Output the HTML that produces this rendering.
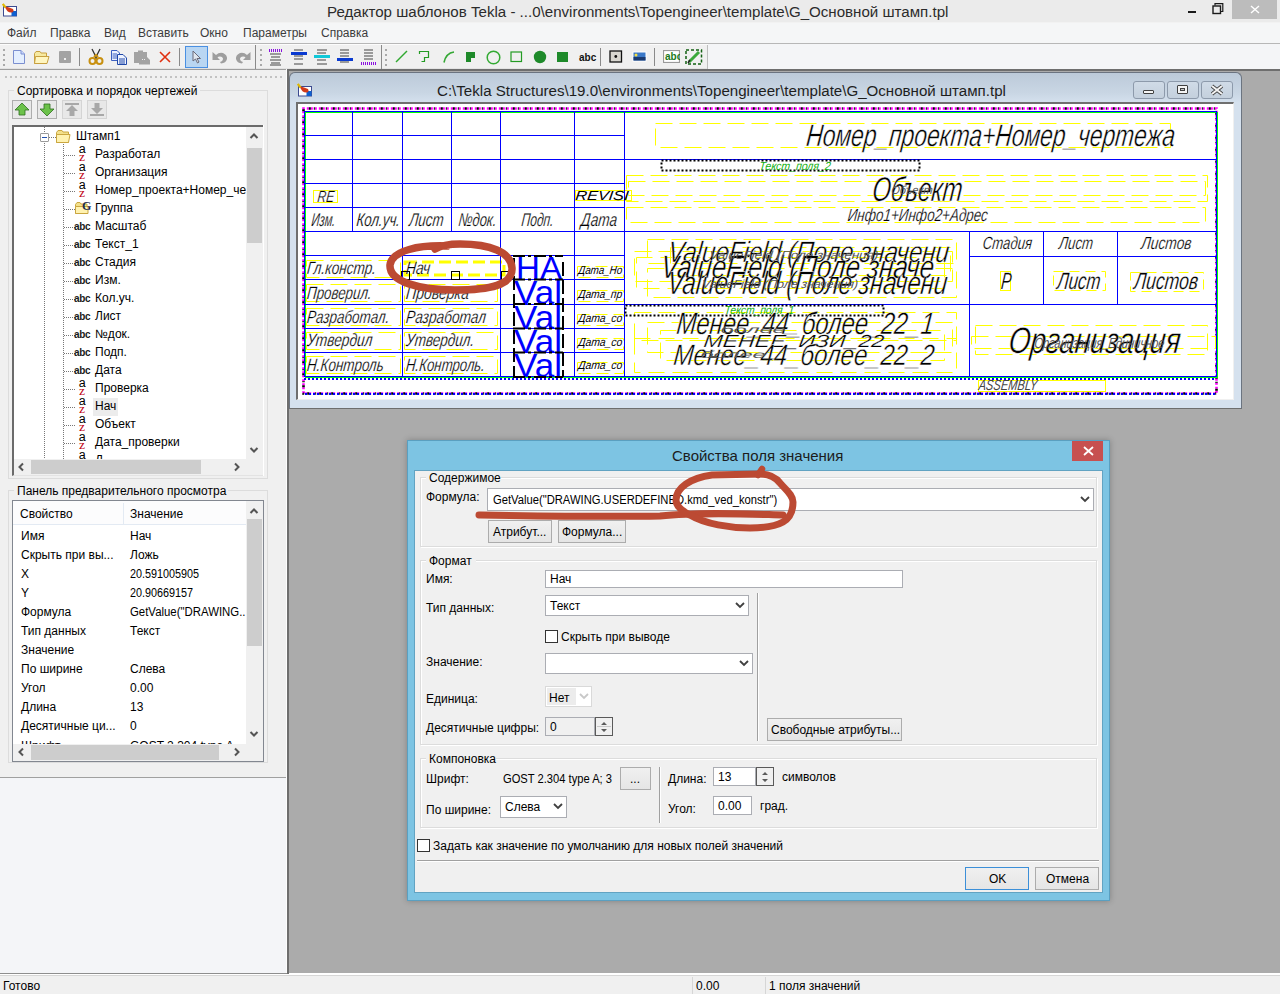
<!DOCTYPE html>
<html><head><meta charset="utf-8">
<style>
*{margin:0;padding:0;box-sizing:border-box}
html,body{width:1280px;height:994px;overflow:hidden;background:#ababab;font-family:"Liberation Sans",sans-serif;font-size:12px;color:#000;position:relative}
.a{position:absolute}
svg.a{overflow:visible}
.t{position:absolute;white-space:pre;line-height:1}
.g{font-family:"Liberation Sans",sans-serif;font-style:italic}
</style></head><body>
<div class="a" style="left:0px;top:0px;width:1280px;height:22px;background:#ebebeb"></div>
<div class="t" style="left:327px;top:4px;font-size:15.1px;color:#2b2b2b;">Редактор шаблонов Tekla - ...0\environments\Topengineer\template\G_Основной штамп.tpl</div>
<svg class="a" style="left:2px;top:3px;" width="17" height="15" viewBox="0 0 17 15"><rect x="1.5" y="3.5" width="13" height="9.5" fill="#fff" stroke="#3c4a90"/><rect x="9.5" y="8" width="5" height="5" fill="#1060d0"/><path d="M3 4 Q5 10 10 9.5 Q12.5 8.5 11 6 Q8 4.5 4 3.5Z" fill="#d23a1a"/><path d="M0.8 0.8 L3.5 4.5" stroke="#e0b800" stroke-width="2.2"/></svg>
<div class="a" style="left:1232px;top:0px;width:45px;height:19px;background:#bcbcbc"></div>
<svg class="a" style="left:1250px;top:5px;" width="10" height="9" viewBox="0 0 10 9"><path d="M1 1 L9 8 M9 1 L1 8" stroke="#fff" stroke-width="1.4"/></svg>
<div class="a" style="left:1188px;top:11px;width:8px;height:2px;background:#1a1a1a"></div>
<svg class="a" style="left:1212px;top:3px;" width="12" height="11" viewBox="0 0 12 11"><rect x="1" y="3" width="7.5" height="7.5" fill="none" stroke="#1a1a1a" stroke-width="1.4"/><path d="M3 2.5 V0.7 H10.8 V8.5 H9" fill="none" stroke="#1a1a1a" stroke-width="1.2"/></svg>
<div class="a" style="left:0px;top:22px;width:1280px;height:1px;background:#f2f2f2"></div>
<div class="a" style="left:0px;top:23px;width:1280px;height:20px;background:#f5f6f7"></div>
<div class="a" style="left:0px;top:43px;width:1280px;height:1px;background:#b7b7b7"></div>
<div class="t" style="left:7px;top:27px;font-size:12px;color:#3c3c3c;">Файл</div>
<div class="t" style="left:50px;top:27px;font-size:12px;color:#3c3c3c;">Правка</div>
<div class="t" style="left:104px;top:27px;font-size:12px;color:#3c3c3c;">Вид</div>
<div class="t" style="left:138px;top:27px;font-size:12px;color:#3c3c3c;">Вставить</div>
<div class="t" style="left:200px;top:27px;font-size:12px;color:#3c3c3c;">Окно</div>
<div class="t" style="left:243px;top:27px;font-size:12px;color:#3c3c3c;">Параметры</div>
<div class="t" style="left:321px;top:27px;font-size:12px;color:#3c3c3c;">Справка</div>
<div class="a" style="left:0px;top:44px;width:1280px;height:25px;background:#f0f0f0"></div>
<div class="a" style="left:0px;top:44px;width:1280px;height:1px;background:#fcfcfc"></div>
<div class="a" style="left:0px;top:68px;width:1280px;height:1px;background:#e3e3e3"></div>
<div class="a" style="left:3px;top:49px;width:2px;height:2px;background:#a9a9a9"></div>
<div class="a" style="left:3px;top:54px;width:2px;height:2px;background:#a9a9a9"></div>
<div class="a" style="left:3px;top:59px;width:2px;height:2px;background:#a9a9a9"></div>
<div class="a" style="left:3px;top:64px;width:2px;height:2px;background:#a9a9a9"></div>
<svg class="a" style="left:13px;top:50px;" width="12" height="14" viewBox="0 0 12 14"><path d="M0.5 0.5 H8 L11.5 4 V13.5 H0.5Z" fill="#e4efff" stroke="#7b8fd0"/><path d="M8 0.5 V4 H11.5" fill="#c8d8ff" stroke="#7b8fd0"/></svg>
<svg class="a" style="left:34px;top:51px;" width="16" height="13" viewBox="0 0 16 13"><path d="M0.5 2.5 L2 0.5 H6 L7 2 H12.5 V12.5 H0.5Z" fill="#f6e9a0" stroke="#c8a040"/><path d="M1.5 5.5 H15 L13 12.5 H0.5Z" fill="#fff6c0" stroke="#c8a040"/></svg>
<div class="a" style="left:59px;top:51px;width:12px;height:12px;background:#a3a3a3;border-radius:1px"></div>
<div class="a" style="left:64px;top:58px;width:2px;height:2px;background:#eee"></div>
<div class="a" style="left:79px;top:48px;width:1px;height:18px;background:#8a8a8a"></div>
<svg class="a" style="left:88px;top:48px;" width="16" height="17" viewBox="0 0 16 17"><path d="M4 1 L9 11 M12 1 L7 11" stroke="#333" stroke-width="1.3"/><circle cx="4.5" cy="13" r="3" fill="none" stroke="#c89010" stroke-width="2"/><circle cx="11.5" cy="13" r="3" fill="none" stroke="#c89010" stroke-width="2"/><path d="M6 9 L8 7 L10 9" stroke="#c89010" stroke-width="2" fill="none"/></svg>
<svg class="a" style="left:111px;top:50px;" width="17" height="15" viewBox="0 0 17 15"><path d="M0.5 0.5 H6 L8.5 3 V10.5 H0.5Z" fill="#eef3ff" stroke="#3b5fc0"/><path d="M1.5 4 H6 M1.5 6 H6 M1.5 8 H6" stroke="#3b5fc0"/><path d="M6.5 4.5 H12 L15.5 8 V14.5 H6.5Z" fill="#eef3ff" stroke="#2048a8"/><path d="M8 9 H14 M8 11 H14 M8 13 H14" stroke="#2048a8"/></svg>
<svg class="a" style="left:133px;top:50px;" width="18" height="15" viewBox="0 0 18 15"><path d="M1 2 H5 V0.5 H10 V2 H14 V7 L17 10 V14.5 H6 V13 H1Z" fill="#a3a3a3"/><path d="M9 10 L10 9 M11 10 L12 9" stroke="#eee"/></svg>
<svg class="a" style="left:159px;top:51px;" width="12" height="12" viewBox="0 0 12 12"><path d="M1 1 L11 11 M11 1 L1 11" stroke="#e03010" stroke-width="1.6"/></svg>
<div class="a" style="left:179px;top:48px;width:1px;height:18px;background:#8a8a8a"></div>
<div class="a" style="left:185px;top:46px;width:23px;height:22px;background:#b9d6f2;border:1px solid #4a90e2"></div>
<svg class="a" style="left:192px;top:50px;" width="10" height="14" viewBox="0 0 10 14"><path d="M1 1 V11 L3.5 9 L5.5 13 L7 12 L5 8.5 H8.5Z" fill="#dfe6ee" stroke="#6b6b7a"/></svg>
<svg class="a" style="left:212px;top:51px;" width="16" height="13" viewBox="0 0 16 13"><path d="M0.5 1 L4 4 Q7 1 11 2 Q15.5 4 15 8 Q14 12 9 12.5 L8 11 Q11 10 11 7.5 Q10.5 5.5 8 5.5 Q6 5.5 5.5 6.5 L8 9 H0.5Z" fill="#9e9e9e"/></svg>
<svg class="a" style="left:235px;top:51px;" width="16" height="13" viewBox="0 0 16 13"><path d="M15.5 1 L12 4 Q9 1 5 2 Q0.5 4 1 8 Q2 12 7 12.5 L8 11 Q5 10 5 7.5 Q5.5 5.5 8 5.5 Q10 5.5 10.5 6.5 L8 9 H15.5Z" fill="#9e9e9e"/></svg>
<div class="a" style="left:255px;top:45px;width:1px;height:24px;background:#8a8a8a"></div>
<div class="a" style="left:260px;top:49px;width:2px;height:2px;background:#a9a9a9"></div>
<div class="a" style="left:260px;top:54px;width:2px;height:2px;background:#a9a9a9"></div>
<div class="a" style="left:260px;top:59px;width:2px;height:2px;background:#a9a9a9"></div>
<div class="a" style="left:260px;top:64px;width:2px;height:2px;background:#a9a9a9"></div>
<div class="a" style="left:269px;top:49px;width:1px;height:3px;background:#8a10e0"></div>
<div class="a" style="left:271px;top:49px;width:1px;height:3px;background:#8a10e0"></div>
<div class="a" style="left:273px;top:49px;width:1px;height:3px;background:#8a10e0"></div>
<div class="a" style="left:275px;top:49px;width:1px;height:3px;background:#8a10e0"></div>
<div class="a" style="left:277px;top:49px;width:1px;height:3px;background:#8a10e0"></div>
<div class="a" style="left:279px;top:49px;width:1px;height:3px;background:#8a10e0"></div>
<div class="a" style="left:281px;top:49px;width:1px;height:3px;background:#8a10e0"></div>
<div class="a" style="left:270px;top:53px;width:11px;height:2px;background:#9a9a9a"></div>
<div class="a" style="left:271px;top:56px;width:9px;height:2px;background:#9a9a9a"></div>
<div class="a" style="left:270px;top:59px;width:11px;height:2px;background:#9a9a9a"></div>
<div class="a" style="left:271px;top:62px;width:9px;height:2px;background:#9a9a9a"></div>
<div class="a" style="left:270px;top:64px;width:11px;height:2px;background:#9a9a9a"></div>
<div class="a" style="left:294px;top:49px;width:9px;height:2px;background:#9a9a9a"></div>
<div class="a" style="left:294px;top:55px;width:9px;height:2px;background:#9a9a9a"></div>
<div class="a" style="left:294px;top:58px;width:9px;height:2px;background:#9a9a9a"></div>
<div class="a" style="left:294px;top:63px;width:9px;height:2px;background:#9a9a9a"></div>
<div class="a" style="left:291px;top:52px;width:16px;height:3px;background:#0a3ad0;border-top:1px dotted #0a3ad0"></div>
<div class="a" style="left:317px;top:49px;width:10px;height:2px;background:#9a9a9a"></div>
<div class="a" style="left:317px;top:52px;width:9px;height:2px;background:#9a9a9a"></div>
<div class="a" style="left:317px;top:59px;width:9px;height:2px;background:#9a9a9a"></div>
<div class="a" style="left:317px;top:63px;width:10px;height:2px;background:#9a9a9a"></div>
<div class="a" style="left:314px;top:55px;width:16px;height:3px;background:#10c8d8"></div>
<div class="a" style="left:340px;top:49px;width:9px;height:2px;background:#9a9a9a"></div>
<div class="a" style="left:340px;top:52px;width:9px;height:2px;background:#9a9a9a"></div>
<div class="a" style="left:340px;top:55px;width:9px;height:2px;background:#9a9a9a"></div>
<div class="a" style="left:340px;top:61px;width:9px;height:2px;background:#9a9a9a"></div>
<div class="a" style="left:337px;top:58px;width:16px;height:3px;background:#0a3ad0"></div>
<div class="a" style="left:364px;top:49px;width:9px;height:2px;background:#9a9a9a"></div>
<div class="a" style="left:364px;top:52px;width:9px;height:2px;background:#9a9a9a"></div>
<div class="a" style="left:364px;top:55px;width:9px;height:2px;background:#9a9a9a"></div>
<div class="a" style="left:364px;top:58px;width:9px;height:2px;background:#9a9a9a"></div>
<div class="a" style="left:361px;top:62px;width:1px;height:3px;background:#8a10e0"></div>
<div class="a" style="left:363px;top:62px;width:1px;height:3px;background:#8a10e0"></div>
<div class="a" style="left:365px;top:62px;width:1px;height:3px;background:#8a10e0"></div>
<div class="a" style="left:367px;top:62px;width:1px;height:3px;background:#8a10e0"></div>
<div class="a" style="left:369px;top:62px;width:1px;height:3px;background:#8a10e0"></div>
<div class="a" style="left:371px;top:62px;width:1px;height:3px;background:#8a10e0"></div>
<div class="a" style="left:373px;top:62px;width:1px;height:3px;background:#8a10e0"></div>
<div class="a" style="left:375px;top:62px;width:1px;height:3px;background:#8a10e0"></div>
<div class="a" style="left:381px;top:45px;width:1px;height:24px;background:#8a8a8a"></div>
<div class="a" style="left:385px;top:49px;width:2px;height:2px;background:#a9a9a9"></div>
<div class="a" style="left:385px;top:54px;width:2px;height:2px;background:#a9a9a9"></div>
<div class="a" style="left:385px;top:59px;width:2px;height:2px;background:#a9a9a9"></div>
<div class="a" style="left:385px;top:64px;width:2px;height:2px;background:#a9a9a9"></div>
<svg class="a" style="left:395px;top:50px;" width="13" height="13" viewBox="0 0 13 13"><path d="M1 12 L12 1" stroke="#2fa82f" stroke-width="1.4"/></svg>
<svg class="a" style="left:419px;top:51px;" width="11" height="12" viewBox="0 0 11 12"><path d="M0.5 3 V0.5 H9.5 V6.5 H5.5 V10.5 H2.5" fill="none" stroke="#239b23" stroke-width="1.2"/></svg>
<svg class="a" style="left:443px;top:51px;" width="12" height="12" viewBox="0 0 12 12"><path d="M1 11.5 Q3 2 11 1" fill="none" stroke="#35a835" stroke-width="1.6"/></svg>
<svg class="a" style="left:466px;top:52px;" width="9" height="10" viewBox="0 0 9 10"><path d="M0 0 H9 V6 H5 V10 H0Z" fill="#1e8a2a"/></svg>
<svg class="a" style="left:486px;top:50px;" width="15" height="15" viewBox="0 0 15 15"><circle cx="7.5" cy="7.5" r="6.3" fill="none" stroke="#33aa33" stroke-width="1.5"/></svg>
<svg class="a" style="left:510px;top:51px;" width="13" height="12" viewBox="0 0 13 12"><rect x="1" y="1" width="10.5" height="9.5" fill="none" stroke="#239b23" stroke-width="1.2"/></svg>
<svg class="a" style="left:533px;top:50px;" width="14" height="14" viewBox="0 0 14 14"><circle cx="7" cy="7" r="6.2" fill="#1e8a2a"/></svg>
<div class="a" style="left:557px;top:52px;width:11px;height:10px;background:#1e8a2a"></div>
<div class="t" style="left:579px;top:53px;font-size:10px;color:#111;font-weight:bold">abc</div>
<div class="a" style="left:600px;top:48px;width:1px;height:18px;background:#8a8a8a"></div>
<svg class="a" style="left:609px;top:50px;" width="14" height="13" viewBox="0 0 14 13"><rect x="1" y="1" width="11.5" height="11" fill="#d8d6d0" stroke="#111" stroke-width="1.3"/><circle cx="6.8" cy="6.5" r="1.4" fill="#111"/></svg>
<svg class="a" style="left:632px;top:51px;" width="16" height="12" viewBox="0 0 16 12"><rect x="0.5" y="0.5" width="14" height="10" fill="#fff"/><rect x="1.5" y="1.5" width="12" height="8" fill="#3a78c8"/><rect x="1.5" y="6" width="12" height="3.5" fill="#1a3a70"/><circle cx="4" cy="4" r="1.5" fill="#f8e040"/></svg>
<div class="a" style="left:654px;top:48px;width:1px;height:18px;background:#8a8a8a"></div>
<svg class="a" style="left:663px;top:50px;overflow:hidden" width="17" height="13" viewBox="0 0 17 13"><rect x="0.5" y="0.5" width="16" height="12" fill="#fff" stroke="#9a9a9a" stroke-width="1.2"/><text x="2" y="10" font-family="Liberation Sans" font-weight="bold" font-size="10" fill="#1a7a1a">abc</text></svg>
<svg class="a" style="left:685px;top:49px;" width="18" height="16" viewBox="0 0 18 16"><rect x="1" y="1" width="15.5" height="14" fill="none" stroke="#126012" stroke-width="1.5" stroke-dasharray="3 2"/><path d="M4 13 L14 3" stroke="#3aa83a" stroke-width="3"/><path d="M3 14 L5 11" stroke="#222" stroke-width="1.5"/></svg>
<div class="a" style="left:708px;top:44px;width:572px;height:25px;background:#f4f5f7"></div>
<div class="a" style="left:707px;top:45px;width:1px;height:24px;background:#bdbdbd"></div>
<div class="a" style="left:287px;top:69px;width:993px;height:2px;background:#6e6e6e"></div>
<div class="a" style="left:289px;top:973px;width:991px;height:1px;background:#ffffff"></div>
<div class="a" style="left:0px;top:974px;width:1280px;height:1px;background:#ffffff"></div>
<div class="a" style="left:0px;top:975px;width:1280px;height:1px;background:#d6d6d6"></div>
<div class="a" style="left:0px;top:976px;width:1280px;height:18px;background:#f0f0f0"></div>
<div class="t" style="left:3px;top:980px;font-size:12px;color:#000;">Готово</div>
<div class="a" style="left:692px;top:977px;width:1px;height:17px;background:#d6d6d6"></div>
<div class="t" style="left:696px;top:980px;font-size:12px;color:#000;">0.00</div>
<div class="a" style="left:765px;top:977px;width:1px;height:17px;background:#d6d6d6"></div>
<div class="t" style="left:769px;top:980px;font-size:12px;color:#000;">1 поля значений</div>
<div class="a" style="left:0px;top:69px;width:287px;height:708px;background:#f0f0f0"></div>
<div class="a" style="left:0px;top:69px;width:287px;height:1px;background:#9e9e9e"></div>
<div class="a" style="left:0px;top:777px;width:287px;height:1px;background:#a0a0a0"></div>
<div class="a" style="left:0px;top:778px;width:287px;height:195px;background:#f4f5f8"></div>
<div class="a" style="left:0px;top:973px;width:287px;height:1px;background:#8e8e8e"></div>
<div class="a" style="left:286px;top:69px;width:1px;height:904px;background:#fdfdfd"></div>
<div class="a" style="left:287px;top:69px;width:2px;height:905px;background:#6e6e6e"></div>
<div class="a" style="left:5px;top:76px;width:2px;height:2px;background:#c2c2c2"></div>
<div class="a" style="left:10px;top:76px;width:2px;height:2px;background:#c2c2c2"></div>
<div class="a" style="left:15px;top:76px;width:2px;height:2px;background:#c2c2c2"></div>
<div class="a" style="left:20px;top:76px;width:2px;height:2px;background:#c2c2c2"></div>
<div class="a" style="left:25px;top:76px;width:2px;height:2px;background:#c2c2c2"></div>
<div class="a" style="left:30px;top:76px;width:2px;height:2px;background:#c2c2c2"></div>
<div class="a" style="left:35px;top:76px;width:2px;height:2px;background:#c2c2c2"></div>
<div class="a" style="left:40px;top:76px;width:2px;height:2px;background:#c2c2c2"></div>
<div class="a" style="left:45px;top:76px;width:2px;height:2px;background:#c2c2c2"></div>
<div class="a" style="left:50px;top:76px;width:2px;height:2px;background:#c2c2c2"></div>
<div class="a" style="left:55px;top:76px;width:2px;height:2px;background:#c2c2c2"></div>
<div class="a" style="left:60px;top:76px;width:2px;height:2px;background:#c2c2c2"></div>
<div class="a" style="left:65px;top:76px;width:2px;height:2px;background:#c2c2c2"></div>
<div class="a" style="left:70px;top:76px;width:2px;height:2px;background:#c2c2c2"></div>
<div class="a" style="left:75px;top:76px;width:2px;height:2px;background:#c2c2c2"></div>
<div class="a" style="left:80px;top:76px;width:2px;height:2px;background:#c2c2c2"></div>
<div class="a" style="left:85px;top:76px;width:2px;height:2px;background:#c2c2c2"></div>
<div class="a" style="left:90px;top:76px;width:2px;height:2px;background:#c2c2c2"></div>
<div class="a" style="left:95px;top:76px;width:2px;height:2px;background:#c2c2c2"></div>
<div class="a" style="left:100px;top:76px;width:2px;height:2px;background:#c2c2c2"></div>
<div class="a" style="left:105px;top:76px;width:2px;height:2px;background:#c2c2c2"></div>
<div class="a" style="left:110px;top:76px;width:2px;height:2px;background:#c2c2c2"></div>
<div class="a" style="left:115px;top:76px;width:2px;height:2px;background:#c2c2c2"></div>
<div class="a" style="left:120px;top:76px;width:2px;height:2px;background:#c2c2c2"></div>
<div class="a" style="left:125px;top:76px;width:2px;height:2px;background:#c2c2c2"></div>
<div class="a" style="left:130px;top:76px;width:2px;height:2px;background:#c2c2c2"></div>
<div class="a" style="left:135px;top:76px;width:2px;height:2px;background:#c2c2c2"></div>
<div class="a" style="left:140px;top:76px;width:2px;height:2px;background:#c2c2c2"></div>
<div class="a" style="left:145px;top:76px;width:2px;height:2px;background:#c2c2c2"></div>
<div class="a" style="left:150px;top:76px;width:2px;height:2px;background:#c2c2c2"></div>
<div class="a" style="left:155px;top:76px;width:2px;height:2px;background:#c2c2c2"></div>
<div class="a" style="left:160px;top:76px;width:2px;height:2px;background:#c2c2c2"></div>
<div class="a" style="left:165px;top:76px;width:2px;height:2px;background:#c2c2c2"></div>
<div class="a" style="left:170px;top:76px;width:2px;height:2px;background:#c2c2c2"></div>
<div class="a" style="left:175px;top:76px;width:2px;height:2px;background:#c2c2c2"></div>
<div class="a" style="left:180px;top:76px;width:2px;height:2px;background:#c2c2c2"></div>
<div class="a" style="left:185px;top:76px;width:2px;height:2px;background:#c2c2c2"></div>
<div class="a" style="left:190px;top:76px;width:2px;height:2px;background:#c2c2c2"></div>
<div class="a" style="left:195px;top:76px;width:2px;height:2px;background:#c2c2c2"></div>
<div class="a" style="left:200px;top:76px;width:2px;height:2px;background:#c2c2c2"></div>
<div class="a" style="left:205px;top:76px;width:2px;height:2px;background:#c2c2c2"></div>
<div class="a" style="left:210px;top:76px;width:2px;height:2px;background:#c2c2c2"></div>
<div class="a" style="left:215px;top:76px;width:2px;height:2px;background:#c2c2c2"></div>
<div class="a" style="left:220px;top:76px;width:2px;height:2px;background:#c2c2c2"></div>
<div class="a" style="left:225px;top:76px;width:2px;height:2px;background:#c2c2c2"></div>
<div class="a" style="left:230px;top:76px;width:2px;height:2px;background:#c2c2c2"></div>
<div class="a" style="left:235px;top:76px;width:2px;height:2px;background:#c2c2c2"></div>
<div class="a" style="left:240px;top:76px;width:2px;height:2px;background:#c2c2c2"></div>
<div class="a" style="left:245px;top:76px;width:2px;height:2px;background:#c2c2c2"></div>
<div class="a" style="left:250px;top:76px;width:2px;height:2px;background:#c2c2c2"></div>
<div class="a" style="left:255px;top:76px;width:2px;height:2px;background:#c2c2c2"></div>
<div class="a" style="left:260px;top:76px;width:2px;height:2px;background:#c2c2c2"></div>
<div class="a" style="left:265px;top:76px;width:2px;height:2px;background:#c2c2c2"></div>
<div class="a" style="left:270px;top:76px;width:2px;height:2px;background:#c2c2c2"></div>
<div class="a" style="left:275px;top:76px;width:2px;height:2px;background:#c2c2c2"></div>
<div class="a" style="left:280px;top:76px;width:2px;height:2px;background:#c2c2c2"></div>
<div class="a" style="left:8px;top:90px;width:260px;height:389px;border:1px solid #dcdcdc;border-right-color:#dcdcdc"></div>
<div class="a" style="left:14px;top:86px;width:186px;height:10px;background:#f0f0f0"></div>
<div class="t" style="left:17px;top:85px;font-size:12px;color:#000;">Сортировка и порядок чертежей</div>
<div class="a" style="left:12px;top:100px;width:20px;height:19px;background:#e8e8e8;border:1px solid #adadad"></div>
<svg class="a" style="left:14px;top:102px;" width="16" height="15" viewBox="0 0 16 15"><path d="M8 1 L15 8 H11 V13 H5 V8 H1Z" fill="#6cc24a" stroke="#2d6e1e" stroke-width="0.8"/></svg>
<div class="a" style="left:37px;top:100px;width:20px;height:19px;background:#e8e8e8;border:1px solid #adadad"></div>
<svg class="a" style="left:39px;top:102px;" width="16" height="15" viewBox="0 0 16 15"><path d="M8 14 L15 7 H11 V2 H5 V7 H1Z" fill="#6cc24a" stroke="#2d6e1e" stroke-width="0.8"/></svg>
<div class="a" style="left:62px;top:100px;width:20px;height:19px;background:#e8e8e8;border:1px solid #d4d4d4"></div>
<svg class="a" style="left:64px;top:102px;" width="16" height="15" viewBox="0 0 16 15"><rect x="1" y="1" width="14" height="2" fill="#a8a8a8"/><path d="M8 3 L14 9 H10.5 V14 H5.5 V9 H2Z" fill="#a8a8a8"/></svg>
<div class="a" style="left:87px;top:100px;width:20px;height:19px;background:#e8e8e8;border:1px solid #d4d4d4"></div>
<svg class="a" style="left:89px;top:102px;" width="16" height="15" viewBox="0 0 16 15"><rect x="1" y="12" width="14" height="2" fill="#a8a8a8"/><path d="M8 12 L14 6 H10.5 V1 H5.5 V6 H2Z" fill="#a8a8a8"/></svg>
<div class="a" style="left:12px;top:125px;width:252px;height:351px;background:#fff;border-top:2px solid #6b6b6b;border-left:2px solid #6b6b6b;border-right:1px solid #e3e3e3;border-bottom:1px solid #e3e3e3"></div>
<div class="a" style="left:44px;top:127px;width:1px;height:332px;background:repeating-linear-gradient(#777 0 1px,transparent 1px 2px)"></div>
<div class="a" style="left:63px;top:142px;width:1px;height:317px;background:repeating-linear-gradient(#777 0 1px,transparent 1px 2px)"></div>
<div class="a" style="left:40px;top:133px;width:9px;height:9px;background:#fff;border:1px solid #9a9a9a;border-radius:1px"></div>
<div class="a" style="left:42px;top:137px;width:5px;height:1px;background:#2050b0"></div>
<div class="a" style="left:49px;top:137px;width:7px;height:1px;background:repeating-linear-gradient(90deg,#777 0 1px,transparent 1px 2px)"></div>
<svg class="a" style="left:56px;top:130px;" width="15" height="13" viewBox="0 0 15 13"><path d="M0.5 2.5 L2 0.5 H6 L7 2 H12.5 V12.5 H0.5Z" fill="#f3e08a" stroke="#caa640"/><path d="M0.5 4.5 H14 L12.5 12.5 H0.5Z" fill="#fff2b0" stroke="#caa640"/></svg>
<div class="t" style="left:76px;top:130px;font-size:12px;color:#000;">Штамп1</div>
<div class="a" style="left:64px;top:155px;width:11px;height:1px;background:repeating-linear-gradient(90deg,#777 0 1px,transparent 1px 2px)"></div>
<svg class="a" style="left:79px;top:146px;" width="8" height="16" viewBox="0 0 8 16"><text x="-0.3" y="6.5" font-family="Liberation Sans" font-size="12.5" fill="#000">a</text><text x="0" y="14.7" font-family="Liberation Serif" font-size="13.5" fill="#c00010">z</text></svg>
<div class="t" style="left:95px;top:148px;font-size:12px;color:#000;">Разработал</div>
<div class="a" style="left:64px;top:173px;width:11px;height:1px;background:repeating-linear-gradient(90deg,#777 0 1px,transparent 1px 2px)"></div>
<svg class="a" style="left:79px;top:164px;" width="8" height="16" viewBox="0 0 8 16"><text x="-0.3" y="6.5" font-family="Liberation Sans" font-size="12.5" fill="#000">a</text><text x="0" y="14.7" font-family="Liberation Serif" font-size="13.5" fill="#c00010">z</text></svg>
<div class="t" style="left:95px;top:166px;font-size:12px;color:#000;">Организация</div>
<div class="a" style="left:64px;top:191px;width:11px;height:1px;background:repeating-linear-gradient(90deg,#777 0 1px,transparent 1px 2px)"></div>
<svg class="a" style="left:79px;top:182px;" width="8" height="16" viewBox="0 0 8 16"><text x="-0.3" y="6.5" font-family="Liberation Sans" font-size="12.5" fill="#000">a</text><text x="0" y="14.7" font-family="Liberation Serif" font-size="13.5" fill="#c00010">z</text></svg>
<div class="a" style="left:95px;top:182px;width:151px;height:18px;overflow:hidden"><div class="t" style="left:0;top:2px;font-size:12px">Номер_проекта+Номер_чертежа</div></div>
<div class="a" style="left:64px;top:209px;width:11px;height:1px;background:repeating-linear-gradient(90deg,#777 0 1px,transparent 1px 2px)"></div>
<svg class="a" style="left:75px;top:201px;" width="15" height="14" viewBox="0 0 15 14"><path d="M0.5 3.5 L2 1.5 H5 L6 3 H12 V12.5 H0.5Z" fill="#f3e08a" stroke="#caa640"/><path d="M0.5 5.5 H13 V12.5 H0.5Z" fill="#fff2b0" stroke="#caa640"/><text x="7" y="9" font-family="Liberation Serif" font-weight="bold" font-size="12" fill="#1a2a50">G</text></svg>
<div class="t" style="left:95px;top:202px;font-size:12px;color:#000;">Группа</div>
<div class="a" style="left:64px;top:227px;width:11px;height:1px;background:repeating-linear-gradient(90deg,#777 0 1px,transparent 1px 2px)"></div>
<svg class="a" style="left:74px;top:221px;" width="18" height="11" viewBox="0 0 18 11"><text x="0" y="9" font-family="Liberation Sans" font-size="10" font-weight="bold" fill="#1a1a1a" letter-spacing="-0.3">abc</text></svg>
<div class="t" style="left:95px;top:220px;font-size:12px;color:#000;">Масштаб</div>
<div class="a" style="left:64px;top:245px;width:11px;height:1px;background:repeating-linear-gradient(90deg,#777 0 1px,transparent 1px 2px)"></div>
<svg class="a" style="left:74px;top:239px;" width="18" height="11" viewBox="0 0 18 11"><text x="0" y="9" font-family="Liberation Sans" font-size="10" font-weight="bold" fill="#1a1a1a" letter-spacing="-0.3">abc</text></svg>
<div class="t" style="left:95px;top:238px;font-size:12px;color:#000;">Текст_1</div>
<div class="a" style="left:64px;top:263px;width:11px;height:1px;background:repeating-linear-gradient(90deg,#777 0 1px,transparent 1px 2px)"></div>
<svg class="a" style="left:74px;top:257px;" width="18" height="11" viewBox="0 0 18 11"><text x="0" y="9" font-family="Liberation Sans" font-size="10" font-weight="bold" fill="#1a1a1a" letter-spacing="-0.3">abc</text></svg>
<div class="t" style="left:95px;top:256px;font-size:12px;color:#000;">Стадия</div>
<div class="a" style="left:64px;top:281px;width:11px;height:1px;background:repeating-linear-gradient(90deg,#777 0 1px,transparent 1px 2px)"></div>
<svg class="a" style="left:74px;top:275px;" width="18" height="11" viewBox="0 0 18 11"><text x="0" y="9" font-family="Liberation Sans" font-size="10" font-weight="bold" fill="#1a1a1a" letter-spacing="-0.3">abc</text></svg>
<div class="t" style="left:95px;top:274px;font-size:12px;color:#000;">Изм.</div>
<div class="a" style="left:64px;top:299px;width:11px;height:1px;background:repeating-linear-gradient(90deg,#777 0 1px,transparent 1px 2px)"></div>
<svg class="a" style="left:74px;top:293px;" width="18" height="11" viewBox="0 0 18 11"><text x="0" y="9" font-family="Liberation Sans" font-size="10" font-weight="bold" fill="#1a1a1a" letter-spacing="-0.3">abc</text></svg>
<div class="t" style="left:95px;top:292px;font-size:12px;color:#000;">Кол.уч.</div>
<div class="a" style="left:64px;top:317px;width:11px;height:1px;background:repeating-linear-gradient(90deg,#777 0 1px,transparent 1px 2px)"></div>
<svg class="a" style="left:74px;top:311px;" width="18" height="11" viewBox="0 0 18 11"><text x="0" y="9" font-family="Liberation Sans" font-size="10" font-weight="bold" fill="#1a1a1a" letter-spacing="-0.3">abc</text></svg>
<div class="t" style="left:95px;top:310px;font-size:12px;color:#000;">Лист</div>
<div class="a" style="left:64px;top:335px;width:11px;height:1px;background:repeating-linear-gradient(90deg,#777 0 1px,transparent 1px 2px)"></div>
<svg class="a" style="left:74px;top:329px;" width="18" height="11" viewBox="0 0 18 11"><text x="0" y="9" font-family="Liberation Sans" font-size="10" font-weight="bold" fill="#1a1a1a" letter-spacing="-0.3">abc</text></svg>
<div class="t" style="left:95px;top:328px;font-size:12px;color:#000;">№док.</div>
<div class="a" style="left:64px;top:353px;width:11px;height:1px;background:repeating-linear-gradient(90deg,#777 0 1px,transparent 1px 2px)"></div>
<svg class="a" style="left:74px;top:347px;" width="18" height="11" viewBox="0 0 18 11"><text x="0" y="9" font-family="Liberation Sans" font-size="10" font-weight="bold" fill="#1a1a1a" letter-spacing="-0.3">abc</text></svg>
<div class="t" style="left:95px;top:346px;font-size:12px;color:#000;">Подп.</div>
<div class="a" style="left:64px;top:371px;width:11px;height:1px;background:repeating-linear-gradient(90deg,#777 0 1px,transparent 1px 2px)"></div>
<svg class="a" style="left:74px;top:365px;" width="18" height="11" viewBox="0 0 18 11"><text x="0" y="9" font-family="Liberation Sans" font-size="10" font-weight="bold" fill="#1a1a1a" letter-spacing="-0.3">abc</text></svg>
<div class="t" style="left:95px;top:364px;font-size:12px;color:#000;">Дата</div>
<div class="a" style="left:64px;top:389px;width:11px;height:1px;background:repeating-linear-gradient(90deg,#777 0 1px,transparent 1px 2px)"></div>
<svg class="a" style="left:79px;top:380px;" width="8" height="16" viewBox="0 0 8 16"><text x="-0.3" y="6.5" font-family="Liberation Sans" font-size="12.5" fill="#000">a</text><text x="0" y="14.7" font-family="Liberation Serif" font-size="13.5" fill="#c00010">z</text></svg>
<div class="t" style="left:95px;top:382px;font-size:12px;color:#000;">Проверка</div>
<div class="a" style="left:64px;top:407px;width:11px;height:1px;background:repeating-linear-gradient(90deg,#777 0 1px,transparent 1px 2px)"></div>
<svg class="a" style="left:79px;top:398px;" width="8" height="16" viewBox="0 0 8 16"><text x="-0.3" y="6.5" font-family="Liberation Sans" font-size="12.5" fill="#000">a</text><text x="0" y="14.7" font-family="Liberation Serif" font-size="13.5" fill="#c00010">z</text></svg>
<div class="a" style="left:93px;top:398px;width:25px;height:18px;background:#ececec"></div>
<div class="t" style="left:95px;top:400px;font-size:12px;color:#000;">Нач</div>
<div class="a" style="left:64px;top:425px;width:11px;height:1px;background:repeating-linear-gradient(90deg,#777 0 1px,transparent 1px 2px)"></div>
<svg class="a" style="left:79px;top:416px;" width="8" height="16" viewBox="0 0 8 16"><text x="-0.3" y="6.5" font-family="Liberation Sans" font-size="12.5" fill="#000">a</text><text x="0" y="14.7" font-family="Liberation Serif" font-size="13.5" fill="#c00010">z</text></svg>
<div class="t" style="left:95px;top:418px;font-size:12px;color:#000;">Объект</div>
<div class="a" style="left:64px;top:443px;width:11px;height:1px;background:repeating-linear-gradient(90deg,#777 0 1px,transparent 1px 2px)"></div>
<svg class="a" style="left:79px;top:434px;" width="8" height="16" viewBox="0 0 8 16"><text x="-0.3" y="6.5" font-family="Liberation Sans" font-size="12.5" fill="#000">a</text><text x="0" y="14.7" font-family="Liberation Serif" font-size="13.5" fill="#c00010">z</text></svg>
<div class="t" style="left:95px;top:436px;font-size:12px;color:#000;">Дата_проверки</div>
<div class="a" style="left:64px;top:461px;width:11px;height:1px;background:repeating-linear-gradient(90deg,#777 0 1px,transparent 1px 2px)"></div>
<svg class="a" style="left:79px;top:452px;" width="8" height="16" viewBox="0 0 8 16"><text x="-0.3" y="6.5" font-family="Liberation Sans" font-size="12.5" fill="#000">a</text><text x="0" y="14.7" font-family="Liberation Serif" font-size="13.5" fill="#c00010">z</text></svg>
<div class="t" style="left:95px;top:454px;font-size:12px;color:#000;">Д</div>
<div class="a" style="left:246px;top:127px;width:17px;height:332px;background:#f0f0f0"></div>
<div class="a" style="left:247px;top:148px;width:15px;height:95px;background:#cdcdcd"></div>
<svg class="a" style="left:249px;top:132px;" width="10" height="8" viewBox="0 0 10 8"><path d="M1.5 6 L5 2.5 L8.5 6" fill="none" stroke="#555" stroke-width="2"/></svg>
<svg class="a" style="left:249px;top:446px;" width="10" height="8" viewBox="0 0 10 8"><path d="M1.5 2 L5 5.5 L8.5 2" fill="none" stroke="#555" stroke-width="2"/></svg>
<div class="a" style="left:14px;top:459px;width:249px;height:16px;background:#f0f0f0"></div>
<div class="a" style="left:31px;top:460px;width:170px;height:14px;background:#cdcdcd"></div>
<svg class="a" style="left:17px;top:462px;" width="8" height="10" viewBox="0 0 8 10"><path d="M6 1.5 L2.5 5 L6 8.5" fill="none" stroke="#555" stroke-width="2"/></svg>
<svg class="a" style="left:233px;top:462px;" width="8" height="10" viewBox="0 0 8 10"><path d="M2 1.5 L5.5 5 L2 8.5" fill="none" stroke="#555" stroke-width="2"/></svg>
<div class="a" style="left:263px;top:125px;width:1px;height:351px;background:#fff"></div>
<div class="a" style="left:8px;top:490px;width:260px;height:273px;border:1px solid #dcdcdc"></div>
<div class="a" style="left:14px;top:485px;width:214px;height:10px;background:#f0f0f0"></div>
<div class="t" style="left:17px;top:485px;font-size:12px;color:#000;">Панель предварительного просмотра</div>
<div class="a" style="left:12px;top:500px;width:252px;height:262px;background:#fff;border:1px solid #828790"></div>
<div class="a" style="left:13px;top:501px;width:233px;height:24px;background:#fcfcfd"></div>
<div class="a" style="left:13px;top:524px;width:233px;height:1px;background:#e3eaf3"></div>
<div class="a" style="left:123px;top:503px;width:1px;height:21px;background:#e3eaf3"></div>
<div class="t" style="left:20px;top:508px;font-size:12px;color:#000;">Свойство</div>
<div class="t" style="left:130px;top:508px;font-size:12px;color:#000;">Значение</div>
<div class="t" style="left:21px;top:530px;font-size:12px;color:#000;">Имя</div>
<div class="t" style="left:130px;top:530px;font-size:12px;color:#000;">Нач</div>
<div class="t" style="left:21px;top:549px;font-size:12px;color:#000;">Скрыть при вы...</div>
<div class="t" style="left:130px;top:549px;font-size:12px;color:#000;">Ложь</div>
<div class="t" style="left:21px;top:568px;font-size:12px;color:#000;">X</div>
<div class="t" style="left:130px;top:568px;font-size:12px;color:#000;;transform:scaleX(0.9);transform-origin:0 0">20.591005905</div>
<div class="t" style="left:21px;top:587px;font-size:12px;color:#000;">Y</div>
<div class="t" style="left:130px;top:587px;font-size:12px;color:#000;;transform:scaleX(0.9);transform-origin:0 0">20.90669157</div>
<div class="t" style="left:21px;top:606px;font-size:12px;color:#000;">Формула</div>
<div class="t" style="left:130px;top:606px;font-size:12px;color:#000;;transform:scaleX(0.95);transform-origin:0 0">GetValue("DRAWING..</div>
<div class="t" style="left:21px;top:625px;font-size:12px;color:#000;">Тип данных</div>
<div class="t" style="left:130px;top:625px;font-size:12px;color:#000;">Текст</div>
<div class="t" style="left:21px;top:644px;font-size:12px;color:#000;">Значение</div>
<div class="t" style="left:21px;top:663px;font-size:12px;color:#000;">По ширине</div>
<div class="t" style="left:130px;top:663px;font-size:12px;color:#000;">Слева</div>
<div class="t" style="left:21px;top:682px;font-size:12px;color:#000;">Угол</div>
<div class="t" style="left:130px;top:682px;font-size:12px;color:#000;">0.00</div>
<div class="t" style="left:21px;top:701px;font-size:12px;color:#000;">Длина</div>
<div class="t" style="left:130px;top:701px;font-size:12px;color:#000;">13</div>
<div class="t" style="left:21px;top:720px;font-size:12px;color:#000;">Десятичные ци...</div>
<div class="t" style="left:130px;top:720px;font-size:12px;color:#000;">0</div>
<div class="a" style="left:13px;top:738px;width:233px;height:7px;overflow:hidden"><div class="t" style="left:8px;top:2px;font-size:12px">Шрифт</div><div class="t" style="left:117px;top:2px;font-size:12px">GOST 2.304 type A</div></div>
<div class="a" style="left:246px;top:501px;width:17px;height:243px;background:#f0f0f0"></div>
<div class="a" style="left:247px;top:519px;width:15px;height:127px;background:#cdcdcd"></div>
<svg class="a" style="left:249px;top:507px;" width="10" height="8" viewBox="0 0 10 8"><path d="M1.5 6 L5 2.5 L8.5 6" fill="none" stroke="#555" stroke-width="2"/></svg>
<svg class="a" style="left:249px;top:730px;" width="10" height="8" viewBox="0 0 10 8"><path d="M1.5 2 L5 5.5 L8.5 2" fill="none" stroke="#555" stroke-width="2"/></svg>
<div class="a" style="left:13px;top:744px;width:250px;height:17px;background:#f0f0f0"></div>
<div class="a" style="left:31px;top:745px;width:188px;height:15px;background:#cdcdcd"></div>
<svg class="a" style="left:17px;top:747px;" width="8" height="10" viewBox="0 0 8 10"><path d="M6 1.5 L2.5 5 L6 8.5" fill="none" stroke="#555" stroke-width="2"/></svg>
<svg class="a" style="left:233px;top:747px;" width="8" height="10" viewBox="0 0 8 10"><path d="M2 1.5 L5.5 5 L2 8.5" fill="none" stroke="#555" stroke-width="2"/></svg>
<div class="a" style="left:289px;top:72px;width:953px;height:337px;background:linear-gradient(#bccad9 0px,#c9d6e4 20px,#d5e1ee 30px,#d5e1ee 100%);border-radius:6px 6px 0 0;border:1px solid #6b7480;border-bottom-color:#6e6e6e"></div>
<div class="t" style="left:437px;top:83px;font-size:15.1px;color:#1e1e1e;">C:\Tekla Structures\19.0\environments\Topengineer\template\G_Основной штамп.tpl</div>
<svg class="a" style="left:297px;top:83px;" width="17" height="15" viewBox="0 0 17 15"><rect x="1.5" y="3.5" width="13" height="9.5" fill="#fff" stroke="#3c4a90"/><rect x="9.5" y="8" width="5" height="5" fill="#1060d0"/><path d="M3 4 Q5 10 10 9.5 Q12.5 8.5 11 6 Q8 4.5 4 3.5Z" fill="#d23a1a"/><path d="M0.8 0.8 L3.5 4.5" stroke="#e0b800" stroke-width="2.2"/></svg>
<div class="a" style="left:1133px;top:81px;width:32px;height:18px;background:linear-gradient(#d0dbe7,#c4d0dd);border:1px solid #8d9aab;border-radius:3px"></div>
<div class="a" style="left:1167px;top:81px;width:32px;height:18px;background:linear-gradient(#d0dbe7,#c4d0dd);border:1px solid #8d9aab;border-radius:3px"></div>
<div class="a" style="left:1201px;top:81px;width:32px;height:18px;background:linear-gradient(#d0dbe7,#c4d0dd);border:1px solid #8d9aab;border-radius:3px"></div>
<div class="a" style="left:1143px;top:90px;width:11px;height:4px;background:#f4f4f4;border:1px solid #404040;border-radius:1px"></div>
<div class="a" style="left:1177px;top:85px;width:11px;height:9px;background:#f4f4f4;border:1px solid #404040;border-radius:1px"></div>
<div class="a" style="left:1180px;top:88px;width:5px;height:3px;background:#c8c8c8;border:1px solid #404040"></div>
<svg class="a" style="left:1210px;top:84px;" width="14" height="12" viewBox="0 0 14 12"><path d="M2 2 L12 10 M12 2 L2 10" stroke="#404040" stroke-width="3.6"/><path d="M2 2 L12 10 M12 2 L2 10" stroke="#f4f4f4" stroke-width="2"/></svg>
<div class="a" style="left:296px;top:102px;width:938px;height:298px;background:#fff;border-top:2px solid #6f6f6f;border-left:2px solid #6f6f6f;border-bottom:1px solid #f0f0f0;border-right:1px solid #f0f0f0"></div>
<svg class="a" style="left:298px;top:104px;font-family:'Liberation Sans'" width="935" height="295" viewBox="298 104 935 295"><rect x="303.5" y="108.5" width="913.0" height="285.0" fill="none" stroke="#ff00ff" stroke-width="2.6" stroke-dasharray="2 2 2 2 2 2" stroke-dashoffset="8.7"/><rect x="303.5" y="108.5" width="913.0" height="285.0" fill="none" stroke="#000" stroke-width="2.6" stroke-dasharray="0 2 2 3 1 4" stroke-dashoffset="8.7"/><line x1="304" y1="379" x2="1216" y2="379" stroke="#0000ff" stroke-width="2" stroke-dasharray="2 2"/><rect x="304.5" y="111.5" width="912" height="265" fill="none" stroke="#0000ff" stroke-width="1"/><rect x="305.5" y="112.5" width="912" height="265" fill="none" stroke="#00ff00" stroke-width="1"/><rect x="304.5" y="111.5" width="912" height="265" fill="none" stroke="#0000ff" stroke-width="1"/><line x1="305" y1="394" x2="1216" y2="394" stroke="#0000ff" stroke-width="2" stroke-dasharray="2 2"/><rect x="313.5" y="190.5" width="24" height="12" fill="none" stroke="#ffff00" stroke-width="1" stroke-dasharray="none"/><rect x="575.5" y="190.5" width="56" height="10" fill="none" stroke="#ffff00" stroke-width="1" stroke-dasharray="none"/><rect x="306.5" y="260.5" width="94" height="17" fill="none" stroke="#ffff00" stroke-width="1" stroke-dasharray="17 7"/><rect x="577.5" y="266.5" width="46" height="11" fill="none" stroke="#ffff00" stroke-width="1" stroke-dasharray="12 6"/><rect x="306.5" y="284.5" width="94" height="17" fill="none" stroke="#ffff00" stroke-width="1" stroke-dasharray="17 7"/><rect x="404.5" y="284.5" width="93" height="17" fill="none" stroke="#ffff00" stroke-width="1" stroke-dasharray="17 7"/><rect x="577.5" y="290.5" width="46" height="11" fill="none" stroke="#ffff00" stroke-width="1" stroke-dasharray="12 6"/><rect x="306.5" y="308.5" width="94" height="17" fill="none" stroke="#ffff00" stroke-width="1" stroke-dasharray="17 7"/><rect x="404.5" y="308.5" width="93" height="17" fill="none" stroke="#ffff00" stroke-width="1" stroke-dasharray="17 7"/><rect x="577.5" y="314.5" width="46" height="11" fill="none" stroke="#ffff00" stroke-width="1" stroke-dasharray="12 6"/><rect x="306.5" y="332.5" width="94" height="17" fill="none" stroke="#ffff00" stroke-width="1" stroke-dasharray="17 7"/><rect x="404.5" y="332.5" width="93" height="17" fill="none" stroke="#ffff00" stroke-width="1" stroke-dasharray="17 7"/><rect x="577.5" y="338.5" width="46" height="11" fill="none" stroke="#ffff00" stroke-width="1" stroke-dasharray="12 6"/><rect x="306.5" y="356.5" width="94" height="17" fill="none" stroke="#ffff00" stroke-width="1" stroke-dasharray="17 7"/><rect x="404.5" y="356.5" width="93" height="17" fill="none" stroke="#ffff00" stroke-width="1" stroke-dasharray="17 7"/><rect x="577.5" y="362.5" width="46" height="11" fill="none" stroke="#ffff00" stroke-width="1" stroke-dasharray="12 6"/><rect x="405" y="262" width="99" height="13" fill="none" stroke="#ffff00" stroke-width="3" stroke-dasharray="12 5"/><rect x="655.5" y="123.5" width="515" height="24" fill="none" stroke="#ffff00" stroke-width="1" stroke-dasharray="17 7"/><rect x="626.5" y="175.5" width="581" height="26" fill="none" stroke="#ffff00" stroke-width="1" stroke-dasharray="17 7"/><rect x="628.5" y="181.5" width="577" height="14" fill="none" stroke="#ffff00" stroke-width="1" stroke-dasharray="17 7"/><rect x="626.5" y="207.5" width="579" height="15" fill="none" stroke="#ffff00" stroke-width="1" stroke-dasharray="17 7"/><rect x="647.5" y="239.5" width="309" height="24" fill="none" stroke="#ffff00" stroke-width="1" stroke-dasharray="17 7"/><rect x="634.5" y="251.5" width="318" height="30" fill="none" stroke="#ffff00" stroke-width="1" stroke-dasharray="17 7"/><rect x="647.5" y="268.5" width="309" height="29" fill="none" stroke="#ffff00" stroke-width="1" stroke-dasharray="17 7"/><rect x="636.5" y="257.5" width="308" height="31" fill="none" stroke="#ffff00" stroke-width="1" stroke-dasharray="16 8"/><rect x="670.5" y="247.5" width="280" height="28" fill="none" stroke="#ffff00" stroke-width="1" stroke-dasharray="16 8"/><rect x="634.5" y="312.5" width="322" height="28" fill="none" stroke="#ffff00" stroke-width="1" stroke-dasharray="17 7"/><rect x="647.5" y="322.5" width="305" height="30" fill="none" stroke="#ffff00" stroke-width="1" stroke-dasharray="17 7"/><rect x="634.5" y="338.5" width="322" height="34" fill="none" stroke="#ffff00" stroke-width="1" stroke-dasharray="16 8"/><rect x="660.5" y="330.5" width="284" height="30" fill="none" stroke="#ffff00" stroke-width="1" stroke-dasharray="16 8"/><rect x="1000.5" y="271.5" width="10" height="19" fill="none" stroke="#ffff00" stroke-width="1" stroke-dasharray="none"/><rect x="1053.5" y="271.5" width="52" height="19" fill="none" stroke="#ffff00" stroke-width="1" stroke-dasharray="10 6"/><rect x="1130.5" y="272.5" width="73" height="19" fill="none" stroke="#ffff00" stroke-width="1" stroke-dasharray="10 6"/><rect x="975.5" y="325.5" width="232" height="29" fill="none" stroke="#ffff00" stroke-width="1" stroke-dasharray="17 7"/><rect x="971.5" y="336.5" width="244" height="12" fill="none" stroke="#ffff00" stroke-width="1" stroke-dasharray="17 7"/><rect x="978.5" y="380.5" width="127" height="11" fill="none" stroke="#ffff00" stroke-width="1" stroke-dasharray="none"/><line x1="304" y1="135.5" x2="624" y2="135.5" stroke="#0000ff" stroke-width="1" /><line x1="304" y1="159.5" x2="624" y2="159.5" stroke="#0000ff" stroke-width="1" /><line x1="304" y1="183.5" x2="624" y2="183.5" stroke="#0000ff" stroke-width="1" /><line x1="304" y1="207.5" x2="624" y2="207.5" stroke="#0000ff" stroke-width="1" /><line x1="304" y1="231.5" x2="1216" y2="231.5" stroke="#0000ff" stroke-width="1" /><line x1="304" y1="255.5" x2="624" y2="255.5" stroke="#0000ff" stroke-width="1" /><line x1="304" y1="279.5" x2="624" y2="279.5" stroke="#0000ff" stroke-width="1" /><line x1="304" y1="304.5" x2="624" y2="304.5" stroke="#0000ff" stroke-width="1" /><line x1="304" y1="328.5" x2="624" y2="328.5" stroke="#0000ff" stroke-width="1" /><line x1="304" y1="352.5" x2="624" y2="352.5" stroke="#0000ff" stroke-width="1" /><line x1="624" y1="159.5" x2="1216" y2="159.5" stroke="#0000ff" stroke-width="1" /><line x1="969" y1="256.5" x2="1216" y2="256.5" stroke="#0000ff" stroke-width="1" /><line x1="624" y1="304.5" x2="1216" y2="304.5" stroke="#0000ff" stroke-width="1" /><line x1="352.5" y1="111" x2="352.5" y2="231" stroke="#0000ff" stroke-width="1" /><line x1="451.5" y1="111" x2="451.5" y2="231" stroke="#0000ff" stroke-width="1" /><line x1="402.5" y1="111" x2="402.5" y2="376" stroke="#0000ff" stroke-width="1" /><line x1="500.5" y1="111" x2="500.5" y2="376" stroke="#0000ff" stroke-width="1" /><line x1="574.5" y1="111" x2="574.5" y2="376" stroke="#0000ff" stroke-width="1" /><line x1="624.5" y1="111" x2="624.5" y2="376" stroke="#0000ff" stroke-width="1" /><line x1="969.5" y1="231" x2="969.5" y2="376" stroke="#0000ff" stroke-width="1" /><line x1="1043.5" y1="231" x2="1043.5" y2="304" stroke="#0000ff" stroke-width="1" /><line x1="1117.5" y1="231" x2="1117.5" y2="304" stroke="#0000ff" stroke-width="1" /><rect x="661.5" y="160.5" width="258" height="10" fill="none" stroke="#000" stroke-width="2" stroke-dasharray="2 2"/><rect x="625.5" y="305.5" width="258" height="10" fill="none" stroke="#000" stroke-width="2" stroke-dasharray="2 2"/><text x="311" y="225.6" font-size="18.5" font-style="italic" fill="#000" stroke="#fff" stroke-width="0.25" textLength="24.0" lengthAdjust="spacingAndGlyphs" opacity="1" transform="translate(311 225.6) skewX(-6) translate(-311 -225.6)">Изм.</text><text x="356" y="225.6" font-size="18.5" font-style="italic" fill="#000" stroke="#fff" stroke-width="0.25" textLength="43.5" lengthAdjust="spacingAndGlyphs" opacity="1" transform="translate(356 225.6) skewX(-6) translate(-356 -225.6)">Кол.уч.</text><text x="408.7" y="225.6" font-size="18.5" font-style="italic" fill="#000" stroke="#fff" stroke-width="0.25" textLength="34.4" lengthAdjust="spacingAndGlyphs" opacity="1" transform="translate(408.7 225.6) skewX(-6) translate(-408.7 -225.6)">Лист</text><text x="458" y="226" font-size="18.5" font-style="italic" fill="#000" stroke="#fff" stroke-width="0.25" textLength="38.1" lengthAdjust="spacingAndGlyphs" opacity="1" transform="translate(458 226) skewX(-6) translate(-458 -226)">№док.</text><text x="521" y="226" font-size="18.5" font-style="italic" fill="#000" stroke="#fff" stroke-width="0.25" textLength="32.1" lengthAdjust="spacingAndGlyphs" opacity="1" transform="translate(521 226) skewX(-6) translate(-521 -226)">Подп.</text><text x="580.6" y="226" font-size="18.5" font-style="italic" fill="#000" stroke="#fff" stroke-width="0.25" textLength="35.9" lengthAdjust="spacingAndGlyphs" opacity="1" transform="translate(580.6 226) skewX(-6) translate(-580.6 -226)">Дата</text><text x="317" y="202" font-size="16.2" font-style="italic" fill="#000" stroke="#fff" stroke-width="0.25" textLength="16.8" lengthAdjust="spacingAndGlyphs" opacity="1" transform="translate(317 202) skewX(-6) translate(-317 -202)">RE</text><text x="575" y="200" font-size="13.2" font-style="italic" fill="#000" textLength="53.2" lengthAdjust="spacingAndGlyphs" opacity="1" transform="translate(575 200) skewX(-6) translate(-575 -200)">REVISI</text><text x="306.5" y="274" font-size="17.9" font-style="italic" fill="#000" stroke="#fff" stroke-width="0.25" textLength="69.1" lengthAdjust="spacingAndGlyphs" opacity="1" transform="translate(306.5 274) skewX(-6) translate(-306.5 -274)">Гл.констр.</text><text x="405.5" y="274" font-size="17.9" font-style="italic" fill="#000" stroke="#fff" stroke-width="0.25" textLength="24.1" lengthAdjust="spacingAndGlyphs" opacity="1" transform="translate(405.5 274) skewX(-6) translate(-405.5 -274)">Нач</text><text x="306.5" y="298.9" font-size="17.9" font-style="italic" fill="#000" stroke="#fff" stroke-width="0.25" textLength="64.7" lengthAdjust="spacingAndGlyphs" opacity="1" transform="translate(306.5 298.9) skewX(-6) translate(-306.5 -298.9)">Проверил.</text><text x="405.5" y="298.9" font-size="17.9" font-style="italic" fill="#000" stroke="#fff" stroke-width="0.25" textLength="63.1" lengthAdjust="spacingAndGlyphs" opacity="1" transform="translate(405.5 298.9) skewX(-6) translate(-405.5 -298.9)">Проверка</text><text x="306.5" y="322.8" font-size="17.9" font-style="italic" fill="#000" stroke="#fff" stroke-width="0.25" textLength="82.4" lengthAdjust="spacingAndGlyphs" opacity="1" transform="translate(306.5 322.8) skewX(-6) translate(-306.5 -322.8)">Разработал.</text><text x="405.5" y="322.8" font-size="17.9" font-style="italic" fill="#000" stroke="#fff" stroke-width="0.25" textLength="80.1" lengthAdjust="spacingAndGlyphs" opacity="1" transform="translate(405.5 322.8) skewX(-6) translate(-405.5 -322.8)">Разработал</text><text x="306.5" y="345.9" font-size="17.9" font-style="italic" fill="#000" stroke="#fff" stroke-width="0.25" textLength="65.5" lengthAdjust="spacingAndGlyphs" opacity="1" transform="translate(306.5 345.9) skewX(-6) translate(-306.5 -345.9)">Утвердил</text><text x="405.5" y="345.9" font-size="17.9" font-style="italic" fill="#000" stroke="#fff" stroke-width="0.25" textLength="68.3" lengthAdjust="spacingAndGlyphs" opacity="1" transform="translate(405.5 345.9) skewX(-6) translate(-405.5 -345.9)">Утвердил.</text><text x="306.5" y="370.6" font-size="17.9" font-style="italic" fill="#000" stroke="#fff" stroke-width="0.25" textLength="76.8" lengthAdjust="spacingAndGlyphs" opacity="1" transform="translate(306.5 370.6) skewX(-6) translate(-306.5 -370.6)">Н.Контроль</text><text x="405.5" y="370.6" font-size="17.9" font-style="italic" fill="#000" stroke="#fff" stroke-width="0.25" textLength="79.0" lengthAdjust="spacingAndGlyphs" opacity="1" transform="translate(405.5 370.6) skewX(-6) translate(-405.5 -370.6)">Н.Контроль.</text><text x="578" y="274.4" font-size="11.8" font-style="italic" fill="#000" textLength="43.9" lengthAdjust="spacingAndGlyphs" opacity="1" transform="translate(578 274.4) skewX(-6) translate(-578 -274.4)">Дата_Но</text><text x="578" y="298.2" font-size="11.8" font-style="italic" fill="#000" textLength="43.9" lengthAdjust="spacingAndGlyphs" opacity="1" transform="translate(578 298.2) skewX(-6) translate(-578 -298.2)">Дата_пр</text><text x="578" y="322" font-size="11.8" font-style="italic" fill="#000" textLength="43.9" lengthAdjust="spacingAndGlyphs" opacity="1" transform="translate(578 322) skewX(-6) translate(-578 -322)">Дата_со</text><text x="578" y="345.7" font-size="11.8" font-style="italic" fill="#000" textLength="43.9" lengthAdjust="spacingAndGlyphs" opacity="1" transform="translate(578 345.7) skewX(-6) translate(-578 -345.7)">Дата_со</text><text x="578" y="368.8" font-size="11.8" font-style="italic" fill="#000" textLength="43.9" lengthAdjust="spacingAndGlyphs" opacity="1" transform="translate(578 368.8) skewX(-6) translate(-578 -368.8)">Дата_со</text><text x="516" y="278.5" font-size="32" fill="#0000ff" textLength="46" lengthAdjust="spacingAndGlyphs">HA</text><text x="514" y="304" font-size="32.5" fill="#0000ff" textLength="48" lengthAdjust="spacingAndGlyphs">Val</text><text x="514" y="328.5" font-size="32.5" fill="#0000ff" textLength="48" lengthAdjust="spacingAndGlyphs">Val</text><text x="514" y="352.5" font-size="32.5" fill="#0000ff" textLength="48" lengthAdjust="spacingAndGlyphs">Val</text><text x="514" y="376.5" font-size="32.5" fill="#0000ff" textLength="48" lengthAdjust="spacingAndGlyphs">Val</text><line x1="513" y1="256" x2="563" y2="256" stroke="#000" stroke-width="2" stroke-dasharray="12 3 3 3"/><line x1="513" y1="279.5" x2="563" y2="279.5" stroke="#000" stroke-width="2" stroke-dasharray="12 3 3 3"/><line x1="513" y1="304" x2="563" y2="304" stroke="#000" stroke-width="2" stroke-dasharray="12 3 3 3"/><line x1="513" y1="328.5" x2="563" y2="328.5" stroke="#000" stroke-width="2" stroke-dasharray="12 3 3 3"/><line x1="513" y1="352.5" x2="563" y2="352.5" stroke="#000" stroke-width="2" stroke-dasharray="12 3 3 3"/><line x1="513" y1="377" x2="563" y2="377" stroke="#000" stroke-width="2" stroke-dasharray="12 3 3 3"/><line x1="514" y1="258" x2="514" y2="377" stroke="#000" stroke-width="2" stroke-dasharray="14 4"/><line x1="563" y1="262" x2="563" y2="377" stroke="#000" stroke-width="2" stroke-dasharray="14 4"/><text x="805.6" y="146" font-size="30.9" font-style="italic" fill="#000" stroke="#fff" stroke-width="0.45" textLength="368.5" lengthAdjust="spacingAndGlyphs" opacity="1" transform="translate(805.6 146) skewX(-6) translate(-805.6 -146)">Номер_проекта+Номер_чертежа</text><text x="759" y="170" font-size="11.8" font-style="italic" fill="#10b010" textLength="71.4" lengthAdjust="spacingAndGlyphs" opacity="1" transform="translate(759 170) skewX(-6) translate(-759 -170)">Текст_поля_2</text><text x="871.6" y="200.6" font-size="34.4" font-style="italic" fill="#000" stroke="#fff" stroke-width="0.45" textLength="90.0" lengthAdjust="spacingAndGlyphs" opacity="1" transform="translate(871.6 200.6) skewX(-6) translate(-871.6 -200.6)">Объект</text><text x="891" y="194" font-size="11.8" font-style="italic" fill="#555" textLength="41.4" lengthAdjust="spacingAndGlyphs" opacity="1" transform="translate(891 194) skewX(-6) translate(-891 -194)">Объект</text><text x="847.2" y="221.25" font-size="17.6" font-style="italic" fill="#000" stroke="#fff" stroke-width="0.25" textLength="140.1" lengthAdjust="spacingAndGlyphs" opacity="1" transform="translate(847.2 221.25) skewX(-6) translate(-847.2 -221.25)">Инфо1+Инфо2+Адрес</text><text x="667.2" y="261.6" font-size="29.4" font-style="italic" fill="#000" stroke="#fff" stroke-width="0.45" textLength="281.1" lengthAdjust="spacingAndGlyphs" opacity="1" transform="translate(667.2 261.6) skewX(-6) translate(-667.2 -261.6)">ValueField (Поле значени</text><text x="660" y="278" font-size="32.4" font-style="italic" fill="#000" stroke="#fff" stroke-width="0.45" textLength="273.1" lengthAdjust="spacingAndGlyphs" opacity="1" transform="translate(660 278) skewX(-6) translate(-660 -278)">ValueField (Поле значе</text><text x="666.4" y="293.6" font-size="32.4" font-style="italic" fill="#000" stroke="#fff" stroke-width="0.45" textLength="280.0" lengthAdjust="spacingAndGlyphs" opacity="1" transform="translate(666.4 293.6) skewX(-6) translate(-666.4 -293.6)">ValueField (Поле значени</text><text x="709" y="259" font-size="11.8" font-style="italic" fill="#555" textLength="169.1" lengthAdjust="spacingAndGlyphs" opacity="1" transform="translate(709 259) skewX(-6) translate(-709 -259)">ValueField (Поле значения)</text><text x="701.6" y="288" font-size="11.8" font-style="italic" fill="#555" textLength="156.2" lengthAdjust="spacingAndGlyphs" opacity="1" transform="translate(701.6 288) skewX(-6) translate(-701.6 -288)">ValueField (Поле значения)</text><text x="724.2" y="314" font-size="11.8" font-style="italic" fill="#10b010" textLength="69.5" lengthAdjust="spacingAndGlyphs" opacity="1" transform="translate(724.2 314) skewX(-6) translate(-724.2 -314)">Текст_поля_1</text><text x="675.8" y="333.6" font-size="30.9" font-style="italic" fill="#000" stroke="#fff" stroke-width="0.45" textLength="257.5" lengthAdjust="spacingAndGlyphs" opacity="1" transform="translate(675.8 333.6) skewX(-6) translate(-675.8 -333.6)">Менее_44_более_22_1</text><text x="703" y="347" font-size="17.6" font-style="italic" fill="#000" stroke="#fff" stroke-width="0.25" textLength="180.6" lengthAdjust="spacingAndGlyphs" opacity="1" transform="translate(703 347) skewX(-6) translate(-703 -347)">МЕНЕЕ_ИЗИ_22</text><text x="672.7" y="364.8" font-size="29.4" font-style="italic" fill="#000" stroke="#fff" stroke-width="0.45" textLength="260.8" lengthAdjust="spacingAndGlyphs" opacity="1" transform="translate(672.7 364.8) skewX(-6) translate(-672.7 -364.8)">Менее_44_более_22_2</text><text x="720" y="333" font-size="10.3" font-style="italic" fill="#555" textLength="78.6" lengthAdjust="spacingAndGlyphs" opacity="1" transform="translate(720 333) skewX(-6) translate(-720 -333)">более_</text><text x="700" y="358" font-size="10.3" font-style="italic" fill="#555" textLength="78.6" lengthAdjust="spacingAndGlyphs" opacity="1" transform="translate(700 358) skewX(-6) translate(-700 -358)">более_</text><text x="982.3" y="249.3" font-size="17.6" font-style="italic" fill="#000" stroke="#fff" stroke-width="0.25" textLength="49.3" lengthAdjust="spacingAndGlyphs" opacity="1" transform="translate(982.3 249.3) skewX(-6) translate(-982.3 -249.3)">Стадия</text><text x="1058.4" y="249.3" font-size="17.6" font-style="italic" fill="#000" stroke="#fff" stroke-width="0.25" textLength="34.2" lengthAdjust="spacingAndGlyphs" opacity="1" transform="translate(1058.4 249.3) skewX(-6) translate(-1058.4 -249.3)">Лист</text><text x="1140.7" y="249.3" font-size="17.6" font-style="italic" fill="#000" stroke="#fff" stroke-width="0.25" textLength="50.4" lengthAdjust="spacingAndGlyphs" opacity="1" transform="translate(1140.7 249.3) skewX(-6) translate(-1140.7 -249.3)">Листов</text><text x="1000.5" y="289" font-size="23.5" font-style="italic" fill="#000" stroke="#fff" stroke-width="0.25" textLength="10.1" lengthAdjust="spacingAndGlyphs" opacity="1" transform="translate(1000.5 289) skewX(-6) translate(-1000.5 -289)">P</text><text x="1056.4" y="289" font-size="23.5" font-style="italic" fill="#000" stroke="#fff" stroke-width="0.25" textLength="43.4" lengthAdjust="spacingAndGlyphs" opacity="1" transform="translate(1056.4 289) skewX(-6) translate(-1056.4 -289)">Лист</text><text x="1133.6" y="289" font-size="23.5" font-style="italic" fill="#000" stroke="#fff" stroke-width="0.25" textLength="63.8" lengthAdjust="spacingAndGlyphs" opacity="1" transform="translate(1133.6 289) skewX(-6) translate(-1133.6 -289)">Листов</text><text x="1007.7" y="353.2" font-size="36.8" font-style="italic" fill="#000" stroke="#fff" stroke-width="0.45" textLength="171.7" lengthAdjust="spacingAndGlyphs" opacity="1" transform="translate(1007.7 353.2) skewX(-6) translate(-1007.7 -353.2)">Организация</text><text x="1034" y="347.7" font-size="14.7" font-style="italic" fill="#555" textLength="130.0" lengthAdjust="spacingAndGlyphs" opacity="1" transform="translate(1034 347.7) skewX(-6) translate(-1034 -347.7)">Организация_Единичное</text><text x="978.2" y="390.4" font-size="14.7" font-style="italic" fill="#444" textLength="58.8" lengthAdjust="spacingAndGlyphs" opacity="1" transform="translate(978.2 390.4) skewX(-6) translate(-978.2 -390.4)">ASSEMBLY</text><rect x="401.5" y="271.5" width="8" height="8" fill="none" stroke="#000" stroke-width="1"/><rect x="451.5" y="271.5" width="8" height="8" fill="none" stroke="#000" stroke-width="1"/><rect x="501.5" y="271.5" width="8" height="8" fill="none" stroke="#000" stroke-width="1"/></svg>
<div class="a" style="left:407px;top:440px;width:703px;height:461px;background:#7dc4e3;border:1px solid #5a9fc0;box-shadow:0 0 6px rgba(0,0,0,0.25)"></div>
<div class="t" style="left:672px;top:448px;font-size:15px;color:#1c1c1c;">Свойства поля значения</div>
<div class="a" style="left:1072px;top:441px;width:31px;height:20px;background:#c75050"></div>
<svg class="a" style="left:1083px;top:446px;" width="11" height="10" viewBox="0 0 11 10"><path d="M1 1 L10 9 M10 1 L1 9" stroke="#fff" stroke-width="1.8"/></svg>
<div class="a" style="left:414px;top:470px;width:689px;height:423px;background:#f0f0f0;border:1px solid #62a3c2"></div>
<div class="a" style="left:420px;top:477px;width:677px;height:70px;border:1px solid #dcdcdc;box-shadow:inset 1px 1px 0 #fff, 1px 1px 0 #fff"></div>
<div class="a" style="left:426px;top:471px;width:74px;height:12px;background:#f0f0f0"></div>
<div class="t" style="left:429px;top:472px;font-size:12px;color:#000;">Содержимое</div>
<div class="t" style="left:426px;top:491px;font-size:12px;color:#000;">Формула:</div>
<div class="a" style="left:487px;top:488px;width:607px;height:23px;background:#fff;border:1px solid #abadb3"></div>
<div class="t" style="left:493px;top:494px;font-size:12px;color:#000;;transform:scaleX(0.935);transform-origin:0 0">GetValue("DRAWING.USERDEFINED.kmd_ved_konstr")</div>
<svg class="a" style="left:1080px;top:496px;" width="10" height="7" viewBox="0 0 10 7"><path d="M1 1 L5 5 L9 1" fill="none" stroke="#404040" stroke-width="1.8"/></svg>
<div class="a" style="left:488px;top:520px;width:64px;height:23px;background:linear-gradient(#f0f0f0,#e5e5e5);border:1px solid #acacac"></div>
<div class="t" style="left:493px;top:526px;font-size:12px;color:#000;">Атрибут...</div>
<div class="a" style="left:558px;top:520px;width:68px;height:23px;background:linear-gradient(#f0f0f0,#e5e5e5);border:1px solid #acacac"></div>
<div class="t" style="left:562px;top:526px;font-size:12px;color:#000;">Формула...</div>
<div class="a" style="left:420px;top:560px;width:677px;height:185px;border:1px solid #dcdcdc;box-shadow:inset 1px 1px 0 #fff, 1px 1px 0 #fff"></div>
<div class="a" style="left:426px;top:554px;width:50px;height:12px;background:#f0f0f0"></div>
<div class="t" style="left:429px;top:555px;font-size:12px;color:#000;">Формат</div>
<div class="t" style="left:426px;top:573px;font-size:12px;color:#000;">Имя:</div>
<div class="a" style="left:545px;top:570px;width:358px;height:18px;background:#fff;border:1px solid #abadb3"></div>
<div class="t" style="left:550px;top:573px;font-size:12px;color:#000;">Нач</div>
<div class="t" style="left:426px;top:602px;font-size:12px;color:#000;">Тип данных:</div>
<div class="a" style="left:545px;top:595px;width:204px;height:21px;background:#fff;border:1px solid #abadb3"></div>
<div class="t" style="left:550px;top:600px;font-size:12px;color:#000;">Текст</div>
<svg class="a" style="left:735px;top:602px;" width="10" height="7" viewBox="0 0 10 7"><path d="M1 1 L5 5 L9 1" fill="none" stroke="#404040" stroke-width="1.8"/></svg>
<div class="a" style="left:757px;top:593px;width:1px;height:148px;background:#a0a0a0;box-shadow:1px 0 0 #fff"></div>
<div class="a" style="left:545px;top:630px;width:13px;height:13px;background:#fff;border:1px solid #333"></div>
<div class="t" style="left:561px;top:631px;font-size:12px;color:#000;">Скрыть при выводе</div>
<div class="t" style="left:426px;top:656px;font-size:12px;color:#000;">Значение:</div>
<div class="a" style="left:545px;top:653px;width:208px;height:21px;background:#fff;border:1px solid #abadb3"></div>
<svg class="a" style="left:739px;top:660px;" width="10" height="7" viewBox="0 0 10 7"><path d="M1 1 L5 5 L9 1" fill="none" stroke="#404040" stroke-width="1.8"/></svg>
<div class="t" style="left:426px;top:693px;font-size:12px;color:#000;">Единица:</div>
<div class="a" style="left:545px;top:686px;width:47px;height:21px;background:#fff;border:1px solid #d9d9d9"></div>
<div class="a" style="left:547px;top:688px;width:29px;height:17px;background:#ececec"></div>
<div class="t" style="left:549px;top:692px;font-size:12px;color:#000;">Нет</div>
<svg class="a" style="left:579px;top:693px;" width="10" height="7" viewBox="0 0 10 7"><path d="M1 1 L5 5 L9 1" fill="none" stroke="#c8c8c8" stroke-width="1.8"/></svg>
<div class="t" style="left:426px;top:722px;font-size:12px;color:#000;">Десятичные цифры:</div>
<div class="a" style="left:545px;top:717px;width:50px;height:19px;background:#f0f0f0;border:1px solid #abadb3"></div>
<div class="t" style="left:550px;top:721px;font-size:12px;color:#000;">0</div>
<div class="a" style="left:595px;top:717px;width:18px;height:19px;background:#f0f0f0;border:1px solid #5a5a5a"></div>
<div class="a" style="left:597px;top:726px;width:14px;height:1px;background:#c8c8c8"></div>
<svg class="a" style="left:600px;top:720px;" width="8" height="14" viewBox="0 0 8 14"><path d="M1 5 L4 2 L7 5Z M1 9 L4 12 L7 9Z" fill="#5a5a5a"/></svg>
<div class="a" style="left:767px;top:718px;width:135px;height:23px;background:linear-gradient(#f0f0f0,#e5e5e5);border:1px solid #acacac"></div>
<div class="t" style="left:771px;top:724px;font-size:12px;color:#000;">Свободные атрибуты...</div>
<div class="a" style="left:420px;top:758px;width:677px;height:70px;border:1px solid #dcdcdc;box-shadow:inset 1px 1px 0 #fff, 1px 1px 0 #fff"></div>
<div class="a" style="left:426px;top:752px;width:70px;height:12px;background:#f0f0f0"></div>
<div class="t" style="left:429px;top:753px;font-size:12px;color:#000;">Компоновка</div>
<div class="t" style="left:426px;top:773px;font-size:12px;color:#000;">Шрифт:</div>
<div class="t" style="left:503px;top:773px;font-size:12px;color:#000;;transform:scaleX(0.93);transform-origin:0 0">GOST 2.304 type A; 3</div>
<div class="a" style="left:620px;top:767px;width:31px;height:23px;background:linear-gradient(#f0f0f0,#e5e5e5);border:1px solid #acacac"></div>
<div class="t" style="left:630px;top:773px;font-size:12px;color:#000;">...</div>
<div class="a" style="left:659px;top:767px;width:1px;height:56px;background:#a0a0a0;box-shadow:1px 0 0 #fff"></div>
<div class="t" style="left:668px;top:773px;font-size:12px;color:#000;">Длина:</div>
<div class="a" style="left:713px;top:767px;width:43px;height:19px;background:#fff;border:1px solid #abadb3"></div>
<div class="t" style="left:718px;top:771px;font-size:12px;color:#000;">13</div>
<div class="a" style="left:756px;top:767px;width:18px;height:19px;background:#f0f0f0;border:1px solid #5a5a5a"></div>
<svg class="a" style="left:761px;top:770px;" width="8" height="14" viewBox="0 0 8 14"><path d="M1 5 L4 2 L7 5Z M1 9 L4 12 L7 9Z" fill="#5a5a5a"/></svg>
<div class="t" style="left:782px;top:771px;font-size:12px;color:#000;">символов</div>
<div class="t" style="left:426px;top:804px;font-size:12px;color:#000;">По ширине:</div>
<div class="a" style="left:500px;top:796px;width:67px;height:22px;background:#fff;border:1px solid #abadb3"></div>
<div class="t" style="left:505px;top:801px;font-size:12px;color:#000;">Слева</div>
<svg class="a" style="left:553px;top:803px;" width="10" height="7" viewBox="0 0 10 7"><path d="M1 1 L5 5 L9 1" fill="none" stroke="#404040" stroke-width="1.8"/></svg>
<div class="t" style="left:668px;top:803px;font-size:12px;color:#000;">Угол:</div>
<div class="a" style="left:713px;top:796px;width:39px;height:19px;background:#fff;border:1px solid #abadb3"></div>
<div class="t" style="left:718px;top:800px;font-size:12px;color:#000;">0.00</div>
<div class="t" style="left:760px;top:800px;font-size:12px;color:#000;">град.</div>
<div class="a" style="left:417px;top:839px;width:13px;height:13px;background:#fff;border:1px solid #333"></div>
<div class="t" style="left:433px;top:840px;font-size:12px;color:#000;">Задать как значение по умолчанию для новых полей значений</div>
<div class="a" style="left:417px;top:860px;width:682px;height:1px;background:#a0a0a0;box-shadow:0 1px 0 #fff"></div>
<div class="a" style="left:965px;top:867px;width:64px;height:23px;background:linear-gradient(#f0f0f0,#e5e5e5);border:1px solid #3c8fd8"></div>
<div class="t" style="left:989px;top:873px;font-size:12px;color:#000;">OK</div>
<div class="a" style="left:1035px;top:867px;width:64px;height:23px;background:linear-gradient(#f0f0f0,#e5e5e5);border:1px solid #acacac"></div>
<div class="t" style="left:1046px;top:873px;font-size:12px;color:#000;">Отмена</div>
<svg class="a" style="left:0px;top:0px;pointer-events:none" width="1280" height="994" viewBox="0 0 1280 994"><path d="M447 246 C420 245 392 250 390 265 C389 282 420 290 455 290 C490 290 513 285 512 268 C511 252 490 244 460 244 C450 244 440 246 435 249" fill="none" stroke="#bc4a33" stroke-width="7.5" stroke-linecap="round"/><path d="M479 515 C540 516 600 517 660 516 C700 512 745 514 783 515" fill="none" stroke="#bc4a33" stroke-width="7" stroke-linecap="round"/><path d="M676 500 C676 488 690 478 712 475 L760 474 C770 474 776 478 780 483 C786 490 793 495 793 502 C793 512 790 518 783 522 C776 526 768 528 750 528 C730 528 705 524 690 515 C680 510 676 505 676 500" fill="none" stroke="#bc4a33" stroke-width="7" stroke-linecap="round"/><path d="M758 475 L762 469" stroke="#bc4a33" stroke-width="6.5" stroke-linecap="round"/></svg>
</body></html>
